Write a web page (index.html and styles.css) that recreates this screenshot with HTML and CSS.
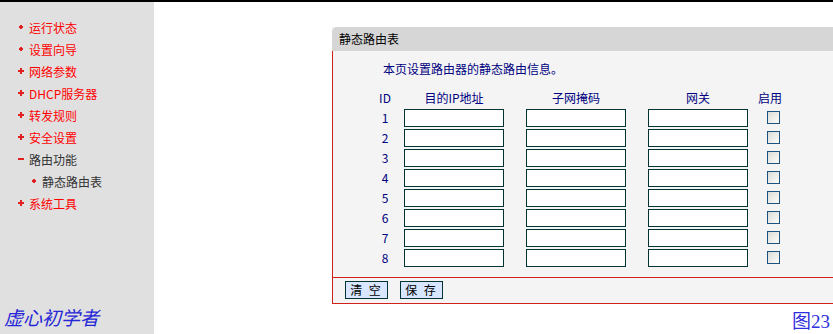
FILE: index.html
```html
<!DOCTYPE html>
<html lang="zh-CN">
<head>
    <meta charset="UTF-8">
    <title>静态路由表</title>
    <link rel="stylesheet" href="styles.css">
</head>
<body>
<div class="page">
    <div class="side">
        <ul class="menu">
            <li class="dot">运行状态</li>
            <li class="dot">设置向导</li>
            <li class="plus">网络参数</li>
            <li class="plus">DHCP服务器</li>
            <li class="plus">转发规则</li>
            <li class="plus">安全设置</li>
            <li class="minus open">路由功能</li>
            <li class="dot sub">静态路由表</li>
            <li class="plus">系统工具</li>
        </ul>
        <div class="sign">虚心初学者</div>
    </div>

    <div class="main">
        <div class="panel">
            <div class="panel-head">静态路由表</div>
            <div class="panel-body">
                <p class="intro">本页设置路由器的静态路由信息。</p>
                <div class="row head">
                    <span class="c-id">ID</span>
                    <span class="c-field">目的IP地址</span>
                    <span class="c-field">子网掩码</span>
                    <span class="c-field last">网关</span>
                    <span class="c-on">启用</span>
                </div>
                <div class="row"><span class="c-id">1</span><input class="c-field"><input class="c-field"><input class="c-field last"><span class="c-on"><span class="check"></span></span></div>
                <div class="row"><span class="c-id">2</span><input class="c-field"><input class="c-field"><input class="c-field last"><span class="c-on"><span class="check"></span></span></div>
                <div class="row"><span class="c-id">3</span><input class="c-field"><input class="c-field"><input class="c-field last"><span class="c-on"><span class="check"></span></span></div>
                <div class="row"><span class="c-id">4</span><input class="c-field"><input class="c-field"><input class="c-field last"><span class="c-on"><span class="check"></span></span></div>
                <div class="row"><span class="c-id">5</span><input class="c-field"><input class="c-field"><input class="c-field last"><span class="c-on"><span class="check"></span></span></div>
                <div class="row"><span class="c-id">6</span><input class="c-field"><input class="c-field"><input class="c-field last"><span class="c-on"><span class="check"></span></span></div>
                <div class="row"><span class="c-id">7</span><input class="c-field"><input class="c-field"><input class="c-field last"><span class="c-on"><span class="check"></span></span></div>
                <div class="row"><span class="c-id">8</span><input class="c-field"><input class="c-field"><input class="c-field last"><span class="c-on"><span class="check"></span></span></div>
            </div>
            <div class="panel-foot">
                <button>清 空</button>
                <button>保 存</button>
            </div>
        </div>
        <div class="fig">图23</div>
    </div>
</div>
</body>
</html>
```

FILE: styles.css
```css
body {
    margin: 0;
    border-top: 2px solid #000;
    background-color: #fff;
    font-family: "Noto Sans CJK SC", sans-serif;
    font-size: 12px;
    overflow: hidden;
}
.page {
    display: flex;
    height: 332px;
}
.side {
    width: 154px;
    flex: none;
    background-color: #e0e0e0;
    display: flex;
    flex-direction: column;
}
.menu {
    list-style: none;
    margin: 0;
    padding: 14px 0 0 0;
}
.menu li {
    display: flex;
    align-items: center;
    height: 22px;
    padding-left: 18px;
    color: #ff0000;
}
.menu li::before {
    content: "";
    width: 6px;
    height: 6px;
    margin-right: 5px;
    flex: none;
    background-repeat: no-repeat;
}
.menu li.plus::before {
    background-image: linear-gradient(#e0201e, #e0201e), linear-gradient(#e0201e, #e0201e);
    background-size: 6px 2px, 2px 6px;
    background-position: 0 2px, 2px 0;
}
.menu li.minus::before {
    background-image: linear-gradient(#e0201e, #e0201e);
    background-size: 6px 2px;
    background-position: 0 2px;
}
.menu li.dot::before {
    background-image: linear-gradient(#e0201e, #e0201e), linear-gradient(#e0201e, #e0201e);
    background-size: 4px 2px, 2px 4px;
    background-position: 1px 2px, 2px 1px;
}
.menu li.open,
.menu li.sub {
    color: #333;
}
.menu li.sub {
    padding-left: 31px;
}
.sign {
    margin-top: auto;
    padding: 0 0 5px 4px;
    font-size: 19px;
    line-height: 24px;
    font-style: italic;
    color: #2626d6;
}
.main {
    flex: 1;
    display: flex;
    flex-direction: column;
    overflow: hidden;
}
.panel {
    width: 700px;
    flex: none;
    margin: 25px 0 0 178px;
    background-color: #f4f4f4;
}
.panel-head {
    height: 24px;
    line-height: 24px;
    padding-left: 7px;
    background-color: #d6d6d6;
    border-top-left-radius: 5px;
    color: #000;
}
.panel-body {
    border-left: 1px solid #d0221a;
    padding: 8px 0 10px 0;
    color: #000080;
}
.intro {
    margin: 0 0 8px 0;
    padding-left: 50px;
    line-height: 20px;
}
.row {
    display: flex;
    align-items: center;
    height: 20px;
    padding-left: 33px;
}
.c-id {
    width: 38px;
    text-align: center;
}
.c-field {
    width: 100px;
    margin-right: 22px;
    text-align: center;
}
.c-field.last {
    margin-right: 0;
}
.c-on {
    width: 44px;
    text-align: center;
}
.row input {
    box-sizing: border-box;
    height: 18px;
    margin-top: 1px;
    padding: 0;
    border: 1px solid #003333;
    background-color: #fff;
}
.check {
    display: block;
    box-sizing: border-box;
    width: 13px;
    height: 13px;
    margin-left: 19px;
    border: 1px solid #1c5180;
    background: linear-gradient(135deg, #dcdcd6, #fbfbfb);
}
.panel-foot {
    display: flex;
    gap: 12px;
    height: 27px;
    padding: 3px 0 0 12px;
    box-sizing: border-box;
    border: 1px solid #d0221a;
    border-right: none;
}
.panel-foot button {
    width: 43px;
    height: 18px;
    padding: 0;
    border: 1px solid #003333;
    background-color: #d8e6ff;
    font-family: "Noto Sans CJK SC", sans-serif;
    font-size: 12px;
    line-height: 16px;
    color: #000;
    letter-spacing: 2px;
}
.fig {
    margin-top: auto;
    align-self: flex-end;
    padding: 0 3px 0 0;
    font-family: "Liberation Serif", "Noto Sans CJK SC", serif;
    font-size: 19px;
    line-height: 24px;
    color: #2f2fe0;
}
```
